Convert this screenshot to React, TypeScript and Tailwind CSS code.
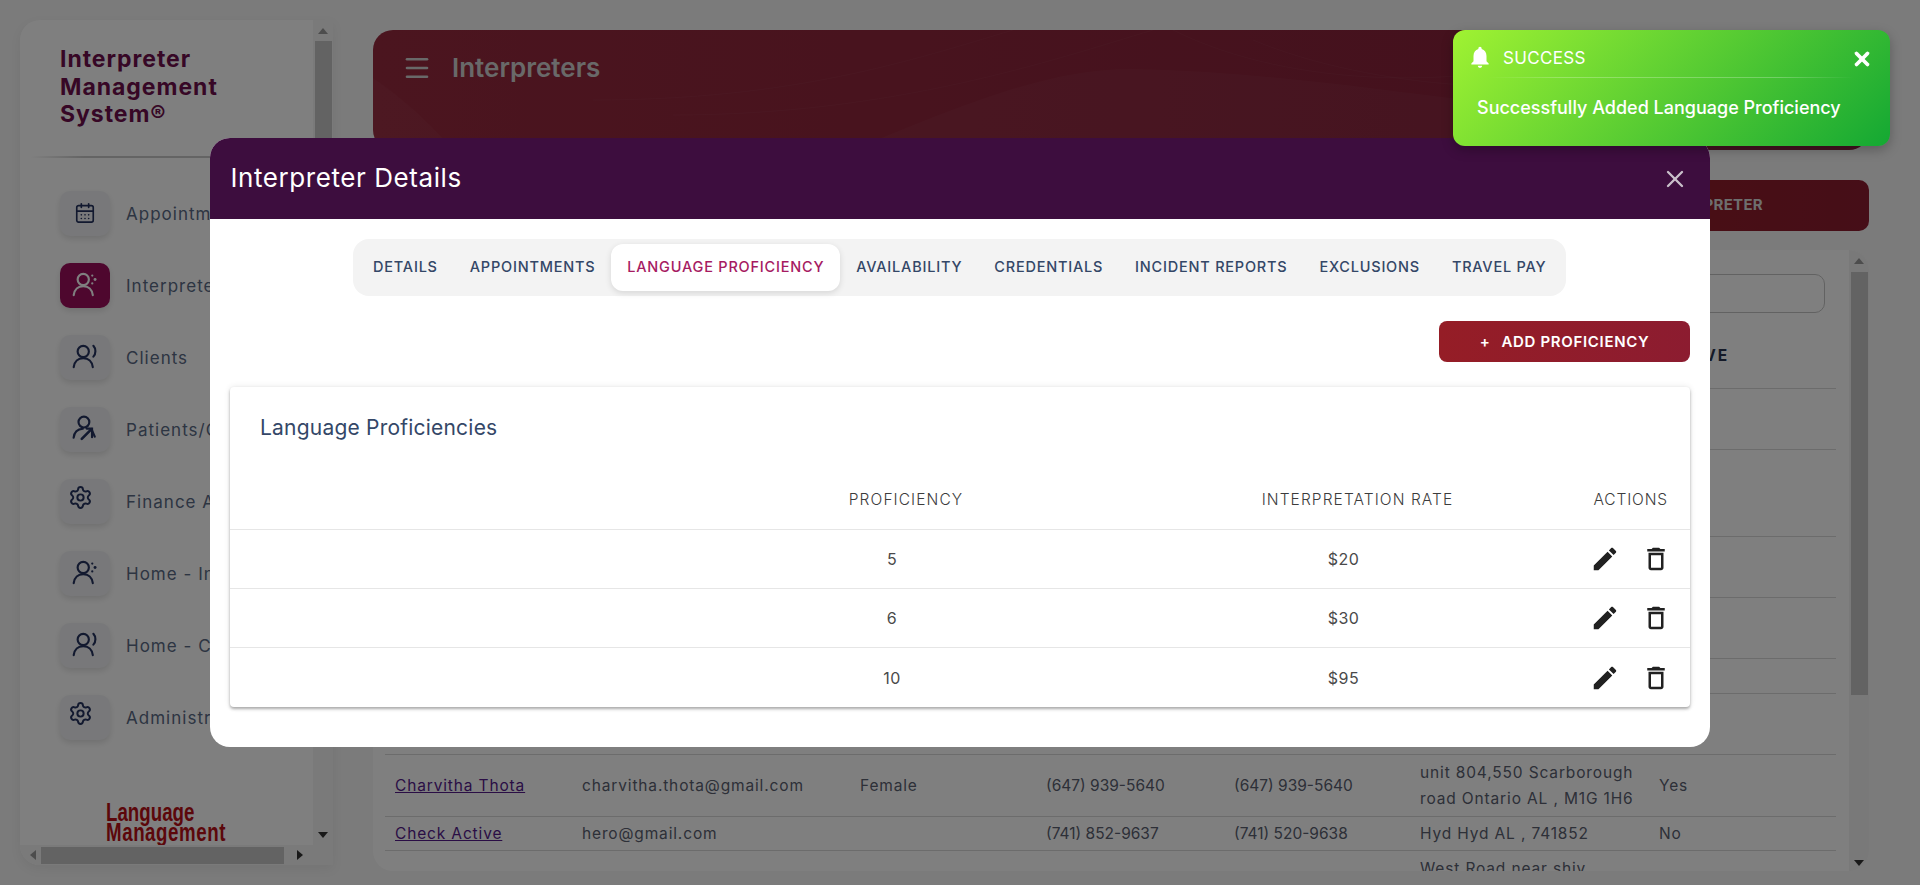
import React from "react";
import { CalendarDays, Settings, Menu, X } from "lucide-react";

const navy = "#25325f";

function UserDots({ color = navy }: { color?: string }) {
  return (
    <svg width="27" height="25" viewBox="0 0 24 22" fill="none" stroke={color} strokeWidth="1.900" strokeLinecap="round" className="-translate-y-px">
      <circle cx="10" cy="6.500" r="5" />
      <path d="M1.500 20.500c.6-5 4-8 8.500-8s7.900 3 8.500 8" />
      <circle cx="18" cy="3" r="1" fill={color} stroke="none" />
      <circle cx="20.500" cy="6.500" r="1.300" fill={color} stroke="none" />
      <circle cx="18" cy="10" r="1" fill={color} stroke="none" />
    </svg>
  );
}
function UserArc() {
  return (
    <svg width="27" height="25" viewBox="0 0 24 22" fill="none" stroke={navy} strokeWidth="1.900" strokeLinecap="round" className="-translate-y-px">
      <circle cx="10" cy="6.500" r="5" />
      <path d="M1.500 20.500c.6-5 4-8 8.500-8s7.900 3 8.500 8" />
      <path d="M19 1.500c2.400 2.600 2.400 7 0 9.600" />
    </svg>
  );
}
function UserArrow() {
  return (
    <svg width="26" height="26" viewBox="0 0 24 24" fill="none" stroke={navy} strokeWidth="2" strokeLinecap="round" className="-translate-y-px">
      <circle cx="11" cy="6.500" r="5" />
      <path d="M1.500 21c.5-4.800 3.500-8 8.500-8.300" />
      <path d="M9 22l9-9" strokeWidth="2.400" />
      <path d="M13.500 12.500h5v8" strokeWidth="2" />
      <path d="M21 20l-3-7" strokeWidth="2" />
    </svg>
  );
}
function Gear() {
  return (
    <span className="-translate-x-[5px] translate-y-[-4px]">
      <Settings size={25} color={navy} strokeWidth={1.900} />
    </span>
  );
}

const nav: { label: string; icon: React.ReactNode; active?: boolean }[] = [
  { label: "Appointments", icon: <CalendarDays size={22} color={navy} strokeWidth={1.800} /> },
  { label: "Interpreters", icon: <UserDots color="#ffffff" />, active: true },
  { label: "Clients", icon: <UserArc /> },
  { label: "Patients/Consumers", icon: <UserArrow /> },
  { label: "Finance Admin", icon: <Gear /> },
  { label: "Home - Interpreters", icon: <UserDots /> },
  { label: "Home - Clients", icon: <UserArc /> },
  { label: "Administration", icon: <Gear /> },
];

const tabs = ["DETAILS", "APPOINTMENTS", "LANGUAGE PROFICIENCY", "AVAILABILITY", "CREDENTIALS", "INCIDENT REPORTS", "EXCLUSIONS", "TRAVEL PAY"];

const profRows = [
  { p: "5", r: "$20" },
  { p: "6", r: "$30" },
  { p: "10", r: "$95" },
];

function Tri({ dir, className = "" }: { dir: "up" | "down" | "left" | "right"; className?: string }) {
  const pts = { up: "0,8 5,2 10,8", down: "0,2 10,2 5,8", left: "8,0 8,10 2,5", right: "2,0 2,10 8,5" }[dir];
  return (
    <svg width="10" height="10" viewBox="0 0 10 10" className={className}>
      <polygon points={pts} fill="currentColor" />
    </svg>
  );
}

function Sidebar() {
  return (
    <aside className="w-[313px] shrink-0 h-[845px] rounded-tl-[20px] rounded-bl-[20px] bg-white flex flex-col overflow-hidden shadow-[0_4px_12px_rgba(0,0,0,0.06)]">
      <div className="flex flex-1 min-h-0">
        <div className="flex-1 min-w-0 overflow-hidden">
          <div className="pl-10 pt-[26px] font-bold text-[23px] leading-[27.500px] tracking-[0.042em] text-[#6e0f4c]">
            Interpreter
            <br />
            Management
            <br />
            System®
          </div>
          <div className="h-[2px] mt-[27px] mx-[10px] bg-[linear-gradient(90deg,transparent,#c8c8c8_20%,#c8c8c8_80%,transparent)]" />
          <div className="mt-[33px] pl-10 flex flex-col gap-[27px]">
            {nav.map((n) => (
              <div key={n.label} className="flex items-center gap-4 h-[45px] whitespace-nowrap">
                <div
                  className={
                    "w-[50px] h-[45px] shrink-0 rounded-[10px] flex items-center justify-center shadow-[0_3px_6px_rgba(0,0,0,0.12)] " +
                    (n.active ? "bg-[#9c0e5c]" : "bg-[#f0f1f4]")
                  }
                >
                  {n.icon}
                </div>
                <span className="pt-1 text-[17px] text-[#5a6a85] tracking-[0.060em]">{n.label}</span>
              </div>
            ))}
          </div>
          <div className="mt-[62px] ml-[86px] text-[26px] leading-[20px] font-bold text-[#b80f16] font-['Liberation_Sans',sans-serif] scale-x-[0.72] origin-left">
            Language
            <br />
            <span className="tracking-[0.030em]">Management</span>
          </div>
        </div>
        <div className="w-[20px] shrink-0 bg-[#f4f4f4] flex flex-col items-center text-[#9a9a9a]">
          <div className="h-[21px] flex items-center">
            <Tri dir="up" />
          </div>
          <div className="w-[17px] h-[640px] bg-[#c6c6c6]" />
          <div className="flex-1 flex items-end pb-[5px] text-[#333]">
            <Tri dir="down" />
          </div>
        </div>
      </div>
      <div className="h-[20px] shrink-0 bg-[#f4f4f4] flex items-center pl-[5px] pr-[18px]">
        <Tri dir="left" className="text-[#9a9a9a] w-[16px]" />
        <div className="w-[243px] h-[17px] bg-[#c6c6c6]" />
        <div className="flex-1 flex justify-center text-[#333]">
          <Tri dir="right" />
        </div>
      </div>
    </aside>
  );
}

const rowHeights = ["h-[61px]", "h-[87px]", "h-[61px]", "h-[61px]", "h-[35px]", "h-[61px]"];

function BackTable() {
  const cols = "grid grid-cols-[197px_278px_186px_188px_186px_239px_176px]";
  return (
    <div className="mt-[19px] h-[621px] rounded-[20px] bg-white flex overflow-hidden">
      <div className="flex-1 min-w-0 pl-3 pr-[13px] text-[15.500px] tracking-[0.055em] text-[#5a6070]">
        <div className="flex justify-end pr-[11px] pt-6">
          <div className="w-[300px] h-[39px] rounded-[10px] border border-[#c4c4c4]" />
        </div>
        <div className={cols + " h-[76px] items-end pb-[21px] border-b border-[#d8d8d8] font-bold text-[#2a3550] tracking-[0.130em]"}>
          <span className="pl-[10px]">NAME</span>
          <span>EMAIL</span>
          <span>GENDER</span>
          <span>CELL</span>
          <span>WORK</span>
          <span>ADDRESS</span>
          <span>ACTIVE</span>
        </div>
        {rowHeights.map((h, i) => (
          <div key={i} className={h + " border-b border-[#d8d8d8]"} />
        ))}
        <div className={cols + " h-[62px] items-center border-b border-[#d8d8d8]"}>
          <a className="pl-[10px] underline text-[#551a8b]">Charvitha Thota</a>
          <span>charvitha.thota@gmail.com</span>
          <span>Female</span>
          <span className="tracking-normal">(647) 939-5640</span>
          <span className="tracking-normal">(647) 939-5640</span>
          <span className="leading-[26px] whitespace-nowrap">
            unit 804,550 Scarborough
            <br />
            road Ontario AL , M1G 1H6
          </span>
          <span>Yes</span>
        </div>
        <div className={cols + " h-[34px] items-center border-b border-[#d8d8d8]"}>
          <a className="pl-[10px] underline text-[#551a8b]">Check Active</a>
          <span>hero@gmail.com</span>
          <span />
          <span className="tracking-normal">(741) 852-9637</span>
          <span className="tracking-normal">(741) 520-9638</span>
          <span>Hyd Hyd AL , 741852</span>
          <span>No</span>
        </div>
        <div className={cols + " pt-[5px]"}>
          <span className="col-start-6 leading-[26px]">West Road near shiv</span>
        </div>
      </div>
      <div className="w-[20px] shrink-0 bg-[#f2f2f2] flex flex-col items-center text-[#9a9a9a]">
        <div className="h-[22px] flex items-center">
          <Tri dir="up" />
        </div>
        <div className="w-[17px] h-[423px] bg-[#c6c6c6]" />
        <div className="flex-1 flex items-end pb-[3px] text-[#333]">
          <Tri dir="down" />
        </div>
      </div>
    </div>
  );
}

function Main() {
  return (
    <main className="ml-10 w-[1496px] shrink-0 pt-[10px]">
      <header className="relative h-[120px] rounded-[20px] overflow-hidden bg-[linear-gradient(90deg,#972a3e,#84203a)]">
        <svg className="absolute inset-0" width="1496" height="120" viewBox="0 0 1496 120" fill="none">
          <path d="M480 120C600 70 680 38 761 39c120 2 240 20 340 32l395 20v29z" fill="#ffffff" fillOpacity="0.030" />
          <path d="M0 48c30 20 60 48 80 72H0z" fill="#ffffff" fillOpacity="0.030" />
          <path d="M220 70C420 70 540 30 640 0M300 85C520 85 680 30 780 0M800 0c120 60 300 60 420 20M880 10c120 50 300 60 420 30" stroke="#ffffff" strokeOpacity="0.035" />
        </svg>
        <div className="relative flex items-center h-[75px] pl-[29px] gap-[20px] text-[#d2d2d2]">
          <Menu size={30} strokeWidth={2.100} />
          <span className="text-[26px] font-semibold">Interpreters</span>
        </div>
      </header>
      <div className="mt-[30px] flex justify-end">
        <button className="w-[310px] h-[51px] rounded-[10px] bg-[linear-gradient(90deg,#951d26,#8c1c30)] text-[#dcdcdc] font-bold text-[15px] tracking-[0.020em] flex items-center justify-end pr-[106px]">
          ADD INTERPRETER
        </button>
      </div>
      <BackTable />
    </main>
  );
}

function Dialog() {
  const grid = "grid grid-cols-[357px_610px_293px_200px]";
  return (
    <div className="absolute left-[209.500px] top-[138px] w-[1500.500px] h-[609px] rounded-[20px] bg-white overflow-hidden">
      <div className="h-[81px] bg-[#3d0d3e] flex items-center justify-between pl-[21px] pr-[21px]">
        <span className="pb-[2px] text-white text-[26px] tracking-[0.022em]">Interpreter Details</span>
        <X size={28} className="text-[#c9bfca]" strokeWidth={2} />
      </div>
      <div className="flex justify-center mt-5">
        <div className="h-[57px] bg-[#f3f3f3] rounded-[16px] flex items-center px-1 text-[14.500px] font-medium tracking-[0.054em] text-[#344767]">
          {tabs.map((t) => (
            <div
              key={t}
              className={
                "h-[47px] px-4 pb-[2px] flex items-center whitespace-nowrap rounded-[12px] " +
                (t === "LANGUAGE PROFICIENCY" ? "bg-white text-[#a61b62] shadow-[0_2px_6px_rgba(0,0,0,0.12)]" : "")
              }
            >
              {t}
            </div>
          ))}
        </div>
      </div>
      <div className="flex justify-end mt-[25px] pr-[20px]">
        <button className="w-[251px] h-[41px] pt-px rounded-[8px] bg-[linear-gradient(90deg,#951d26,#8c1c30)] text-white font-semibold text-[15px] tracking-[0.045em] flex items-center justify-center gap-[11px]">
          <span>+</span>
          <span>ADD PROFICIENCY</span>
        </button>
      </div>
      <div className="mt-[25px] mx-[20.500px] h-[320px] rounded-[4px] bg-white shadow-[0_2px_3px_rgba(0,0,0,0.3),0_0_6px_rgba(0,0,0,0.1)]">
        <div className="h-[143px] relative pl-[30px] pt-[25px] text-[21px] tracking-[0.010em] text-[#344767] border-b border-[#e6e6e6]">
          Language Proficiencies
          <div className={"absolute left-0 right-0 bottom-[18px] " + grid + " text-[15.500px] font-light tracking-[0.070em] text-[#3c3c3c] text-center"}>
            <span />
            <span className="pl-7">PROFICIENCY</span>
            <span className="pl-7">INTERPRETATION RATE</span>
            <span className="text-right pr-[22px] tracking-[0.055em]">ACTIONS</span>
          </div>
        </div>
        {profRows.map((r, i) => (
          <div key={r.p} className={grid + " h-[59px] items-center text-center text-[16px] tracking-[0.030em] text-[#4a4a4a] " + (i < 2 ? "border-b border-[#e6e6e6]" : "")}>
            <span />
            <span>{r.p}</span>
            <span>{r.r}</span>
            <span className="flex justify-end items-center gap-[21px] pr-[19px]">
              <svg width="30" height="30" viewBox="0 0 24 24" fill="#212121">
                <path d="M3 17.250V21h3.750L17.810 9.940l-3.750-3.750L3 17.250zM20.710 7.040c.39-.39.39-1.020 0-1.410l-2.340-2.340c-.39-.39-1.020-.39-1.410 0l-1.830 1.830 3.750 3.750 1.830-1.830z" />
              </svg>
              <svg width="30" height="30" viewBox="0 0 24 24" fill="#212121">
                <path d="M6 19c0 1.100.9 2 2 2h8c1.100 0 2-.9 2-2V7H6v12zM8 9h8v10H8V9zm7.500-5l-1-1h-5l-1 1H5v2h14V4z" />
              </svg>
            </span>
          </div>
        ))}
      </div>
    </div>
  );
}

function Toast() {
  return (
    <div className="absolute left-[1453px] top-[30px] w-[437px] h-[116px] rounded-[12px] bg-[linear-gradient(135deg,#a0f232,#14a833)] shadow-[0_4px_12px_rgba(0,0,0,0.25)] text-white">
      <div className="h-[47px] mx-[14px] flex items-center justify-between pt-[10px] relative">
        <div className="flex items-center gap-[10px]">
          <svg width="26" height="26" viewBox="0 0 24 24" fill="#ffffff" className="-translate-y-[2px]">
            <path d="M12 22c1.100 0 2-.9 2-2h-4c0 1.100.89 2 2 2zm6-6v-5c0-3.070-1.640-5.640-4.500-6.320V4c0-.83-.67-1.500-1.500-1.500s-1.500.67-1.500 1.500v.68C7.630 5.360 6 7.920 6 11v5l-2 2v1h16v-1l-2-2z" />
          </svg>
          <span className="text-[17px] tracking-[0.020em]">SUCCESS</span>
        </div>
        <X size={22} strokeWidth={4} className="mr-[3px]" />
      </div>
      <div className="h-px mx-[36px] bg-[linear-gradient(90deg,transparent,rgba(255,255,255,0.25)_20%,rgba(255,255,255,0.25)_80%,transparent)]" />
      <div className="pl-[24px] mt-[16px] text-[18px] font-medium whitespace-nowrap">Successfully Added Language Proficiency</div>
    </div>
  );
}

export default function App() {
  return (
    <div className="relative w-[1920px] h-[885px] overflow-hidden bg-[#f6f6f6] font-[Inter,sans-serif]">
      <div className="flex pl-5 pt-5">
        <Sidebar />
        <Main />
      </div>
      <div className="absolute inset-0 bg-black/50" />
      <Dialog />
      <Toast />
    </div>
  );
}
